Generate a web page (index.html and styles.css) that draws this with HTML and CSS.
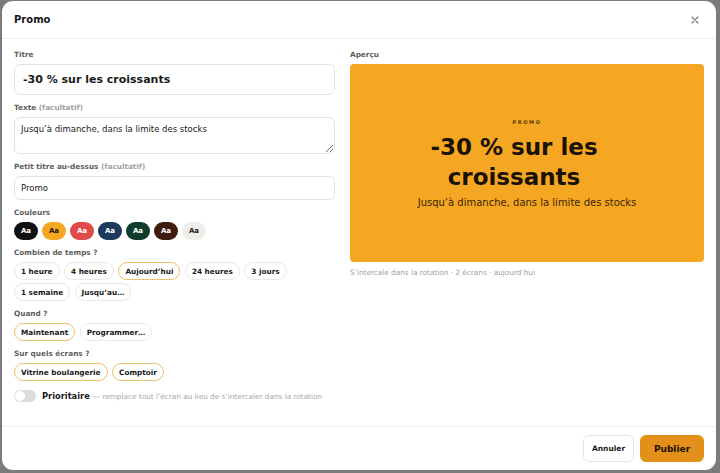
FILE: index.html
```html
<!DOCTYPE html>
<html lang="fr">
<head>
<meta charset="utf-8">
<title>Promo</title>
<link rel="stylesheet" href="styles.css">
</head>
<body>
<div class="backdrop">
  <div class="modal">
    <header class="modal-head">
      <h1 class="modal-title">Promo</h1>
      <span class="close">
        <svg width="8" height="8" viewBox="0 0 8 8"><path d="M1 1L7 7M7 1L1 7" stroke="#777" stroke-width="1.1" stroke-linecap="round"/></svg>
      </span>
    </header>
    <div class="modal-body">
      <div class="form-col">
        <div class="field">
          <label class="lbl">Titre</label>
          <input class="inp inp-title" type="text" value="-30 % sur les croissants">
        </div>
        <div class="field">
          <label class="lbl">Texte <span class="opt">(facultatif)</span></label>
          <textarea class="inp inp-area">Jusqu’à dimanche, dans la limite des stocks</textarea>
        </div>
        <div class="field">
          <label class="lbl">Petit titre au-dessus <span class="opt">(facultatif)</span></label>
          <input class="inp inp-small" type="text" value="Promo">
        </div>
        <div class="field">
          <label class="lbl">Couleurs</label>
          <div class="swatches">
            <span class="sw sw-black">Aa</span>
            <span class="sw sw-orange">Aa</span>
            <span class="sw sw-red">Aa</span>
            <span class="sw sw-navy">Aa</span>
            <span class="sw sw-green">Aa</span>
            <span class="sw sw-brown">Aa</span>
            <span class="sw sw-light">Aa</span>
          </div>
        </div>
        <div class="field">
          <label class="lbl">Combien de temps ?</label>
          <div class="chips">
            <span class="chip">1 heure</span>
            <span class="chip">4 heures</span>
            <span class="chip on">Aujourd’hui</span>
            <span class="chip">24 heures</span>
            <span class="chip">3 jours</span>
            <span class="chip">1 semaine</span>
            <span class="chip">Jusqu’au…</span>
          </div>
        </div>
        <div class="field">
          <label class="lbl">Quand ?</label>
          <div class="chips">
            <span class="chip on">Maintenant</span>
            <span class="chip">Programmer…</span>
          </div>
        </div>
        <div class="field">
          <label class="lbl">Sur quels écrans ?</label>
          <div class="chips">
            <span class="chip on">Vitrine boulangerie</span>
            <span class="chip on">Comptoir</span>
          </div>
        </div>
        <div class="toggle-row">
          <span class="toggle"><span class="knob"></span></span>
          <span class="toggle-name">Prioritaire</span>
          <span class="toggle-desc">— remplace tout l’écran au lieu de s’intercaler dans la rotation</span>
        </div>
      </div>
      <div class="preview-col">
        <label class="lbl">Aperçu</label>
        <div class="preview">
          <div class="pv-kicker">PROMO</div>
          <div class="pv-title">-30 % sur les croissants</div>
          <div class="pv-sub">Jusqu’à dimanche, dans la limite des stocks</div>
        </div>
        <p class="caption">S’intercale dans la rotation · 2 écrans · aujourd’hui</p>
      </div>
    </div>
    <footer class="modal-foot">
      <button class="btn btn-ghost">Annuler</button>
      <button class="btn btn-primary">Publier</button>
    </footer>
  </div>
</div>
</body>
</html>
```
FILE: styles.css
```css
* { box-sizing: border-box; }
html, body { margin: 0; padding: 0; }
body {
  width: 720px;
  height: 473px;
  overflow: hidden;
  font-family: "DejaVu Sans", "Liberation Sans", sans-serif;
  color: #1a1a1a;
  background: #7b7b7b;
}
.backdrop {
  width: 720px;
  height: 473px;
  padding: 1px 4px 3px 2px;
  display: flex;
}
.modal {
  flex: 1;
  background: #fff;
  border-radius: 11px;
  display: flex;
  flex-direction: column;
  overflow: hidden;
}
.modal-head {
  height: 38px;
  flex: none;
  display: flex;
  align-items: center;
  justify-content: space-between;
  padding: 0 17px 0 12px;
  border-bottom: 1px solid #eeeeee;
}
.modal-title {
  margin: 0;
  font-size: 10px;
  font-weight: bold;
  color: #151515;
}
.close { display: flex; }
.modal-body {
  flex: 1;
  display: flex;
  gap: 15px;
  padding: 11px 12px 0 12px;
}
.form-col {
  width: 321px;
  flex: none;
  display: flex;
  flex-direction: column;
  gap: 8px;
}
.field { display: flex; flex-direction: column; }
.lbl {
  display: block;
  font-size: 7.3px;
  line-height: 10px;
  font-weight: bold;
  color: #5e5e5e;
  margin-bottom: 4px;
}
.opt { color: #a3a3a3; }
.inp {
  font-family: inherit;
  border: 1px solid #e2e2e2;
  border-radius: 6px;
  color: #1a1a1a;
  background: #fff;
  outline: none;
  width: 100%;
  margin: 0;
}
.inp-title {
  height: 31px;
  padding: 0 8px;
  font-size: 11px;
  font-weight: bold;
}
.inp-area {
  height: 37px;
  padding: 6px 6px;
  font-size: 8.5px;
  line-height: 11px;
  resize: vertical;
  display: block;
}
.inp-small {
  height: 24px;
  padding: 0 6px;
  font-size: 8.5px;
}
.swatches { display: flex; gap: 4px; }
.sw {
  width: 24px;
  height: 18px;
  border-radius: 9px;
  display: flex;
  align-items: center;
  justify-content: center;
  font-size: 7px;
  font-weight: bold;
  color: #fff;
}
.sw-black { background: #111111; }
.sw-orange { background: #f5a623; color: #1a1208; }
.sw-red { background: #df4b4b; }
.sw-navy { background: #1d3a5e; }
.sw-green { background: #0e3d2d; }
.sw-brown { background: #3e1d0f; }
.sw-light { background: #efeeea; color: #1a1a1a; }
.chips {
  display: flex;
  flex-wrap: wrap;
  gap: 3px 4.5px;
}
.chip {
  height: 18px;
  padding: 0 6px;
  border: 1px solid #e9e9e9;
  border-radius: 9px;
  display: flex;
  align-items: center;
  font-size: 7.3px;
  font-weight: bold;
  color: #1a1a1a;
  background: #fff;
}
.chip.on { border-color: #eec06a; }
.toggle-row {
  display: flex;
  align-items: center;
  height: 14px;
}
.toggle {
  width: 22px;
  height: 12px;
  border-radius: 6px;
  background: #dddddd;
  position: relative;
  margin-right: 6px;
  flex: none;
}
.knob {
  position: absolute;
  left: 1px;
  top: 1px;
  width: 10px;
  height: 10px;
  border-radius: 50%;
  background: #fff;
}
.toggle-name {
  font-size: 8.3px;
  font-weight: bold;
  color: #1a1a1a;
  margin-right: 3px;
}
.toggle-desc {
  font-size: 7.3px;
  color: #a8a8a8;
}
.preview-col {
  flex: 1;
  display: flex;
  flex-direction: column;
}
.preview {
  height: 198px;
  background: #f5a623;
  border-radius: 4px;
  display: flex;
  flex-direction: column;
  align-items: center;
  justify-content: center;
  text-align: center;
  padding: 0 20px;
}
.pv-kicker {
  font-size: 5px;
  line-height: 8px;
  font-weight: bold;
  letter-spacing: 1.6px;
  color: #5a3b08;
  margin-bottom: 6px;
}
.pv-title {
  font-size: 23px;
  line-height: 30px;
  font-weight: bold;
  color: #1b1206;
  width: 240px;
  margin-right: 26px;
}
.pv-sub {
  font-size: 10px;
  line-height: 13px;
  color: #3a2608;
  margin-top: 4px;
}
.caption {
  margin: 6px 0 0 0;
  font-size: 7.3px;
  line-height: 10px;
  color: #a0a0a0;
}
.modal-foot {
  flex: none;
  height: 44px;
  border-top: 1px solid #eeeeee;
  display: flex;
  justify-content: flex-end;
  align-items: flex-start;
  gap: 6px;
  padding: 8px 12px 0 12px;
}
.btn {
  font-family: inherit;
  font-weight: bold;
  height: 27px;
  border-radius: 6px;
  cursor: pointer;
  margin: 0;
}
.btn-ghost {
  width: 51px;
  font-size: 7.5px;
  background: #fff;
  border: 1px solid #e6e6e6;
  color: #1a1a1a;
}
.btn-primary {
  width: 64px;
  font-size: 9px;
  background: #e3901a;
  border: 1px solid #e3901a;
  color: #1a1208;
}
```
